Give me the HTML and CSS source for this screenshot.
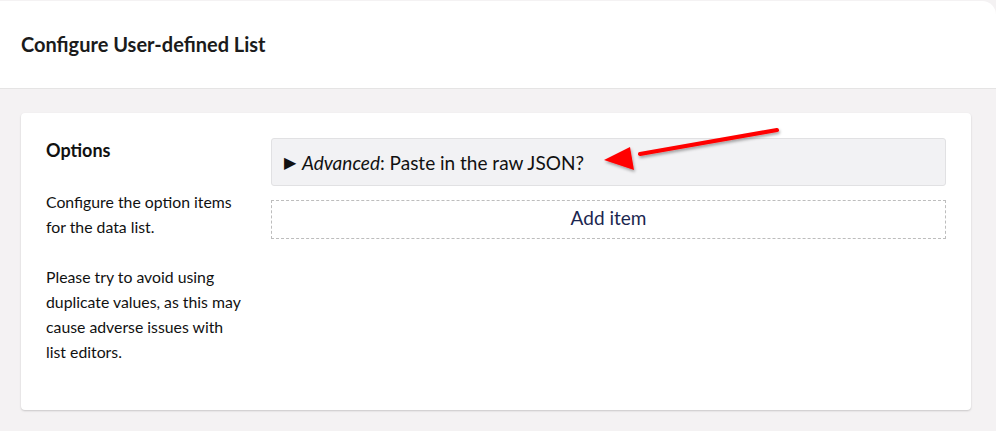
FILE: index.html
```html
<!DOCTYPE html>
<html>
<head>
<meta charset="utf-8">
<link rel="stylesheet" href="styles.css">
</head>
<body>
<div class="page">
  <header class="header">
    <h1 class="title">Configure User-defined List</h1>
  </header>
  <main class="content">
    <section class="card">
      <div class="label-col">
        <h2 class="label">Options</h2>
        <p class="desc">Configure the option items for the data list.</p>
        <p class="desc">Please try to avoid using duplicate values, as this may cause adverse issues with list editors.</p>
      </div>
      <div class="editor-col">
        <div class="details"><span class="tri">&#9654;</span><em>Advanced</em>: Paste in the raw JSON?</div>
        <button class="add">Add item</button>
      </div>
    </section>
  </main>
  <svg class="arrow" width="200" height="60" viewBox="0 0 200 60">
    <defs>
      <filter id="sh" x="-20%" y="-50%" width="140%" height="200%">
        <feDropShadow dx="1" dy="2" stdDeviation="1.5" flood-color="#000" flood-opacity="0.35"/>
      </filter>
    </defs>
    <g filter="url(#sh)">
      <line x1="175" y1="7" x2="38" y2="31" stroke="#f00" stroke-width="4" stroke-linecap="round"/>
      <polygon points="2,37 28,24 32,47" fill="#f00"/>
    </g>
  </svg>
</div>
</body>
</html>
```
FILE: styles.css
```css
* { box-sizing: border-box; }
html, body { margin: 0; padding: 0; }
body {
  font-family: Lato, "Open Sans", sans-serif;
  color: #111;
  background: #f4f2f3;
  width: 996px;
  height: 431px;
  overflow: hidden;
}
.page { position: relative; height: 431px; }
.header {
  height: 88px;
  margin-top: 1px;
  background: #fff;
  border-bottom: 1px solid #e5e4e4;
  border-top-right-radius: 14px;
  display: flex;
  align-items: center;
  padding: 0 21px 2px;
}
.title {
  margin: 0;
  font-size: 20px;
  font-weight: 700;
  color: #1b1b1b;
}
.content { padding: 24px 25px 20px 21px; }
.card {
  background: #fff;
  border-radius: 4px;
  box-shadow: 0 1px 2px rgba(0,0,0,0.18);
  height: 297px;
  display: flex;
  padding: 25px 25px 20px 25px;
  gap: 26px;
}
.label-col { width: 199px; flex: none; }
.label {
  margin: 1px 0 0;
  font-size: 18px;
  font-weight: 700;
  line-height: 22px;
}
.desc {
  margin: 28px 0 0;
  font-size: 15.8px;
  line-height: 25px;
}
.desc + .desc { margin-top: 25px; }
.editor-col { flex: 1; display: flex; flex-direction: column; gap: 14px; }
.details {
  height: 48px;
  background: #f2f2f4;
  border: 1px solid #e1e1e3;
  border-radius: 3px;
  display: flex;
  align-items: center;
  padding-left: 12px;
  font-size: 19px;
  color: #111;
}
.tri { font-size: 16px; margin-right: 6px; }
.add {
  height: 39px;
  background: #fff;
  border: 1px dashed #bdbdbd;
  font-family: inherit;
  font-size: 19px;
  font-weight: 400;
  color: #1b264f;
  padding: 0 0 4px;
}
.arrow { position: absolute; left: 602px; top: 122px; }
```
